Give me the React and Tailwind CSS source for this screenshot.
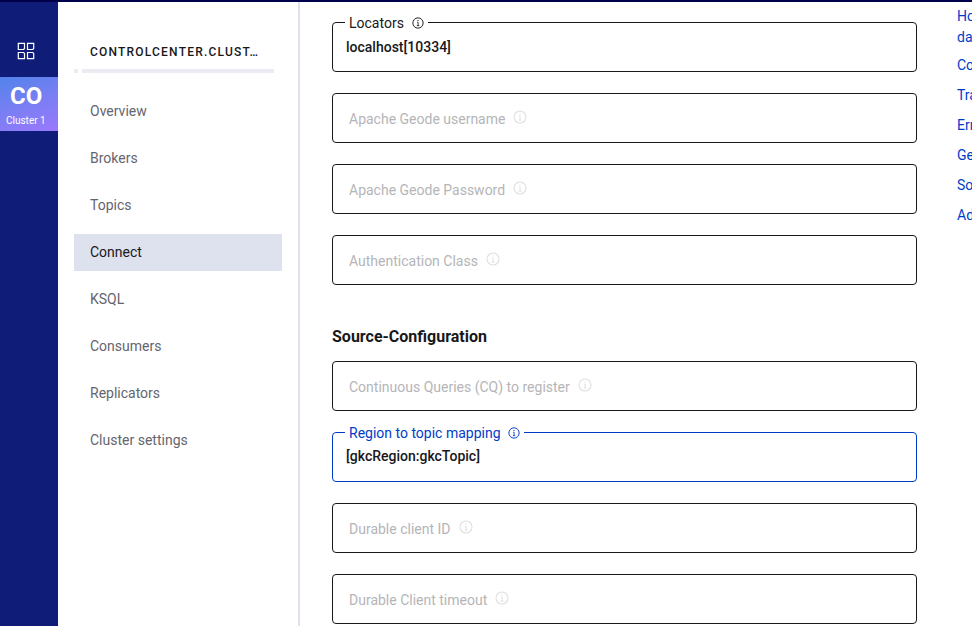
import React from "react";

const navItems = [
  "Overview",
  "Brokers",
  "Topics",
  "Connect",
  "KSQL",
  "Consumers",
  "Replicators",
  "Cluster settings",
];

const links = ["Common", "Transforms", "Error handling", "General", "Source-Configuration", "Additional Properties"];

function InfoIcon({ className }) {
  return (
    <svg viewBox="0 0 14 14" className={className} fill="none" stroke="currentColor">
      <circle cx="7" cy="7" r="6" strokeWidth="1.1" />
      <path d="M6 6.1h1.1v4M5.7 10.1h2.8" strokeWidth="1" />
      <path d="M6.4 4h1.2" strokeWidth="1.2" />
    </svg>
  );
}

function EmptyField({ label }) {
  return (
    <div className="flex h-[50px] items-center rounded border border-[#18181b] px-4 pt-[2px]">
      <span className="text-[14px] leading-5 text-[#b5b5b8]">{label}</span>
      <InfoIcon className="mb-1 ml-2 size-[14px] text-[#e0e0e2]" />
    </div>
  );
}

function FilledField({ label, value, active }) {
  return (
    <div className={`relative h-[50px] rounded border px-[13px] ${active ? "border-[#003cc8] pt-[13px]" : "border-[#18181b] pt-[14px]"}`}>
      <div className={`absolute -top-[10px] left-3 flex h-5 items-center bg-white pr-1 pl-1 ${active ? "text-[#003cc8]" : "text-[#18181b]"}`}>
        <span className="text-[14px] leading-5">{label}</span>
        <InfoIcon className={active ? "ml-[7px] size-3" : "ml-2 size-3"} />
      </div>
      <div className="text-[14px] leading-5 font-medium text-[#18181b]">{value}</div>
    </div>
  );
}

export default function App() {
  return (
    <div className="flex h-[626px] w-[972px] flex-col overflow-hidden bg-white font-['Roboto',sans-serif]">
      <div className="h-[2px] shrink-0 bg-[#00004b]" />
      <div className="flex min-h-0 flex-1">
        <aside className="w-[58px] shrink-0 bg-[#0f1c78]">
          <div className="flex h-[75px] items-center pt-[22px] pl-[17px]">
            <svg className="size-[18px]" viewBox="0 0 18 18" fill="none" stroke="#ffffff" strokeWidth="1.2">
              <path d="M1.3 1.3H7.5V6.5L6.6 7.5H1.3Z" />
              <path d="M10.5 1.3H16.7V6.5L15.8 7.5H10.5Z" />
              <path d="M1.3 10.5H6.6L7.5 11.4V16.6H1.3Z" />
              <path d="M10.5 10.5H15.8L16.7 11.4V16.6H10.5Z" />
            </svg>
          </div>
          <div className="h-[54px] bg-linear-160 from-[#5083ea] to-[#9a78fd] pt-[5px] text-white">
            <div className="pl-[10px] text-[24px] leading-7 font-bold">CO</div>
            <div className="pt-[5px] pl-[6px] text-[10px] leading-3 whitespace-nowrap">Cluster 1</div>
          </div>
        </aside>
        <nav className="w-[242px] shrink-0 border-r-2 border-[#dee2ef] pl-4">
          <div className="mt-10 ml-4 w-[176px] text-[12px] leading-5 font-medium tracking-[1.2px] whitespace-nowrap text-[#18181b]">
            CONTROLCENTER.CLUST…
          </div>
          <div className="mt-[7px] flex gap-1">
            <div className="h-1 w-1 bg-[#ebecf3]" />
            <div className="h-1 w-48 bg-[#ebecf3]" />
          </div>
          <div className="mt-5 flex w-52 flex-col gap-[10px]">
            {navItems.map((item) => (
              <div
                key={item}
                className={`flex h-[37px] items-center pb-[2px] pl-4 text-[14px] leading-5 ${
                  item === "Connect" ? "bg-[#dee2ef] text-[#18181b]" : "text-[#65656e]"
                }`}
              >
                {item}
              </div>
            ))}
          </div>
        </nav>
        <main className="ml-8 w-[585px] shrink-0 pt-5">
          <div className="flex flex-col gap-[21px]">
            <FilledField label="Locators" value="localhost[10334]" />
            <EmptyField label="Apache Geode username" />
            <EmptyField label="Apache Geode Password" />
            <EmptyField label="Authentication Class" />
          </div>
          <h2 className="mt-10 text-[16px] leading-6 font-bold text-[#18181b]">Source-Configuration</h2>
          <div className="mt-3 flex flex-col gap-[21px]">
            <EmptyField label="Continuous Queries (CQ) to register" />
            <FilledField label="Region to topic mapping" value="[gkcRegion:gkcTopic]" active />
            <EmptyField label="Durable client ID" />
            <EmptyField label="Durable Client timeout" />
          </div>
        </main>
        <div className="ml-10 flex w-[200px] shrink-0 flex-col gap-[10px] pt-1 text-[14px] leading-5 text-[#003cc8]">
          <div className="-mb-[3px] leading-[21px]">
            How should we
            <br />
            data
          </div>
          {links.map((link) => (
            <div key={link}>{link}</div>
          ))}
        </div>
      </div>
    </div>
  );
}
